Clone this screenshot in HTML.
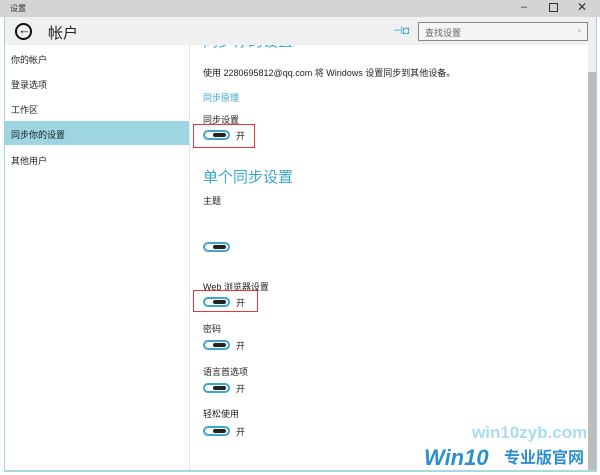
<!DOCTYPE html>
<html><head><meta charset="utf-8"><style>
*{margin:0;padding:0;box-sizing:border-box}
body{width:600px;height:475px;background:#fff;position:relative;overflow:hidden;font-family:"Liberation Sans","Noto Sans CJK SC",sans-serif;color:#222}
.a{position:absolute;white-space:nowrap}
.t{font-size:9px}
.tg{position:absolute;left:203px;width:27px;height:10px;border:2px solid #3aa7c9;border-radius:6px}
.tg:after{content:"";position:absolute;right:2px;top:1px;width:13px;height:4px;border-radius:3px;background:#222}
.on{position:absolute;left:236px;font-size:9px}
.rb{position:absolute;border:1.5px solid #e23a3a}
</style></head><body>
<div class="a" style="left:190px;top:45px;width:398px;height:10px;overflow:hidden"><div class="a" style="left:13px;top:-13px;font-size:15px;color:#3aa7c9;line-height:20px">同步你的设置</div></div>
<div class="a" style="left:0;top:0;width:600px;height:17px;background:#d4d4d4"></div>
<div class="a t" style="left:10px;top:3px;font-size:8px;color:#333">设置</div>
<div class="a" style="left:521px;top:1px;font-size:11px;color:#333">–</div>
<div class="a" style="left:549px;top:3px;width:9px;height:9px;border:1px solid #333"></div>
<div class="a" style="left:577px;top:0px;font-size:12px;color:#333">✕</div>
<div class="a" style="left:4px;top:17px;width:592px;height:28px;background:#f0f0f0"></div>
<div class="a" style="left:15px;top:23px;width:17px;height:17px;border:2px solid #111;border-radius:50%"></div>
<div class="a" style="left:18px;top:22px;font-size:13px;font-weight:bold">←</div>
<div class="a" style="left:48px;top:22px;font-size:15px">帐户</div>
<div class="a" style="left:393px;top:24px;font-size:11px;color:#3aa7c9">⊣◘</div>
<div class="a" style="left:418px;top:22px;width:170px;height:19px;border:1px solid #888;background:#f5f5f5"></div>
<div class="a" style="left:425px;top:26px;font-size:9px;color:#666">查找设置</div>
<div class="a" style="left:577px;top:26px;font-size:8px;color:#999">⌕</div>
<div class="a" style="left:4px;top:17px;width:1px;height:455px;background:#9fd3df"></div>
<div class="a" style="left:596px;top:17px;width:1px;height:455px;background:#9fd3df"></div>
<div class="a" style="left:4px;top:470px;width:593px;height:2px;background:#a8d8e4"></div>
<div class="a" style="left:189px;top:45px;width:1px;height:425px;background:#e4e4e4"></div>
<div class="a" style="left:588px;top:45px;width:8px;height:425px;background:#f0f0f0"></div>
<div class="a" style="left:588px;top:72px;width:8px;height:398px;background:#bcbcbc"></div>
<div class="a t" style="left:11px;top:53px">你的帐户</div>
<div class="a t" style="left:11px;top:78px">登录选项</div>
<div class="a t" style="left:11px;top:103px">工作区</div>
<div class="a" style="left:5px;top:121px;width:184px;height:24px;background:#9ed5e2"></div>
<div class="a t" style="left:11px;top:128px">同步你的设置</div>
<div class="a t" style="left:11px;top:154px">其他用户</div>
<div class="a t" style="left:203px;top:66px">使用 2280695812@qq.com 将 Windows 设置同步到其他设备。</div>
<div class="a t" style="left:203px;top:91px;color:#3aa7c9">同步原理</div>
<div class="a t" style="left:203px;top:113px">同步设置</div>
<div class="tg" style="top:130px"></div><div class="on" style="top:129px">开</div>
<div class="rb" style="left:193px;top:124px;width:62px;height:24px"></div>
<div class="a" style="left:203px;top:166px;font-size:15px;color:#3aa7c9">单个同步设置</div>
<div class="a t" style="left:203px;top:194px">主题</div>
<div class="tg" style="top:242px"></div>
<div class="a t" style="left:203px;top:280px">Web 浏览器设置</div>
<div class="tg" style="top:297px"></div><div class="on" style="top:296px">开</div>
<div class="rb" style="left:193px;top:290px;width:65px;height:22px"></div>
<div class="a t" style="left:203px;top:322px">密码</div>
<div class="tg" style="top:340px"></div><div class="on" style="top:339px">开</div>
<div class="a t" style="left:203px;top:365px">语言首选项</div>
<div class="tg" style="top:383px"></div><div class="on" style="top:382px">开</div>
<div class="a t" style="left:203px;top:407px">轻松使用</div>
<div class="tg" style="top:426px"></div><div class="on" style="top:425px">开</div>
<div class="a" style="left:472px;top:423px;font-size:17px;font-weight:bold;color:#a9dcec">win10zyb.com</div>
<div class="a" style="left:424px;top:446px;font-size:22px;font-weight:bold;font-style:italic;color:#2b8fd0;line-height:24px">Win10</div>
<div class="a" style="left:504px;top:450px;font-size:16px;font-weight:bold;color:#2b8fd0;line-height:18px">专业版官网</div>
</body></html>
